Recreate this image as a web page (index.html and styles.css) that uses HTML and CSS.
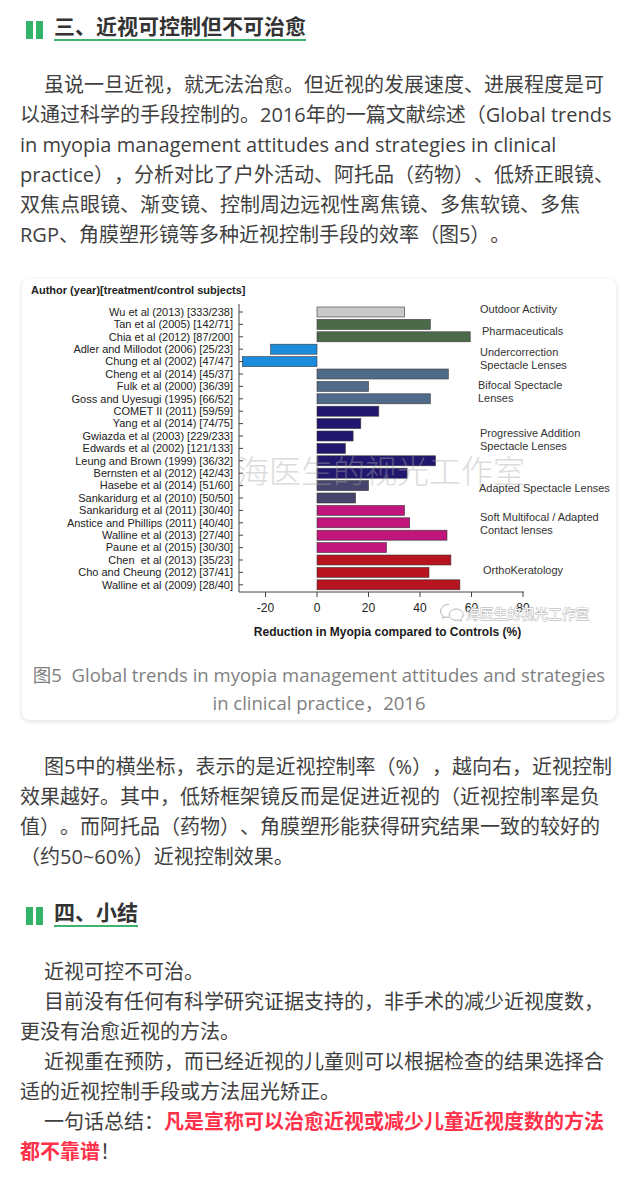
FILE: index.html
```html
<!DOCTYPE html>
<html lang="zh-CN">
<head>
<meta charset="utf-8">
<title>近视可控制但不可治愈</title>
<link rel="stylesheet" href="styles.css">
</head>
<body>
<main class="article">
  <div class="sec-head">
    <span class="bars"><i></i><i></i></span>
    <h2 class="sec-title">三、近视可控制但不可治愈</h2>
  </div>

  <p class="para lead">虽说一旦近视，就无法治愈。但近视的发展速度、进展程度是可以通过科学的手段控制的。2016年的一篇文献综述（Global trends in myopia management attitudes and strategies in clinical practice），分析对比了户外活动、阿托品（药物）、低矫正眼镜、双焦点眼镜、渐变镜、控制周边远视性离焦镜、多焦软镜、多焦RGP、角膜塑形镜等多种近视控制手段的效率（图5）。</p>

  <figure class="figure">
    <svg class="chart" width="594" height="382" viewBox="22 279 594 382" xmlns="http://www.w3.org/2000/svg">
      <text class="ttl" x="31" y="294">Author (year)[treatment/control subjects]</text>

      <g class="lbl" text-anchor="end">
        <text x="233" y="315.8">Wu et al (2013) [333/238]</text>
        <text x="233" y="328.2">Tan et al (2005) [142/71]</text>
        <text x="233" y="340.6">Chia et al (2012) [87/200]</text>
        <text x="233" y="353">Adler and Millodot (2006) [25/23]</text>
        <text x="233" y="365.4">Chung et al (2002) [47/47]</text>
        <text x="233" y="377.8">Cheng et al (2014) [45/37]</text>
        <text x="233" y="390.2">Fulk et al (2000) [36/39]</text>
        <text x="233" y="402.6">Goss and Uyesugi (1995) [66/52]</text>
        <text x="233" y="415">COMET II (2011) [59/59]</text>
        <text x="233" y="427.4">Yang et al (2014) [74/75]</text>
        <text x="233" y="439.8">Gwiazda et al (2003) [229/233]</text>
        <text x="233" y="452.2">Edwards et al (2002) [121/133]</text>
        <text x="233" y="464.6">Leung and Brown (1999) [36/32]</text>
        <text x="233" y="477">Bernsten et al (2012) [42/43]</text>
        <text x="233" y="489.4">Hasebe et al (2014) [51/60]</text>
        <text x="233" y="501.8">Sankaridurg et al (2010) [50/50]</text>
        <text x="233" y="514.2">Sankaridurg et al (2011) [30/40]</text>
        <text x="233" y="526.6">Anstice and Phillips (2011) [40/40]</text>
        <text x="233" y="539">Walline et al (2013) [27/40]</text>
        <text x="233" y="551.4">Paune et al (2015) [30/30]</text>
        <text x="233" y="563.8" xml:space="preserve">Chen  et al (2013) [35/23]</text>
        <text x="233" y="576.2">Cho and Cheung (2012) [37/41]</text>
        <text x="233" y="588.6">Walline et al (2009) [28/40]</text>
      </g>

      <g class="bar">
        <rect class="c-out" x="317" y="307" width="87.6" height="10"/>
        <rect class="c-ph" x="317" y="319.4" width="113.3" height="10"/>
        <rect class="c-ph" x="317" y="331.8" width="153.2" height="10"/>
        <rect class="c-und" x="270.6" y="344.2" width="46.4" height="10"/>
        <rect class="c-und" x="242.3" y="356.6" width="74.7" height="10"/>
        <rect class="c-bif" x="317" y="369" width="131.3" height="10"/>
        <rect class="c-bif" x="317" y="381.4" width="51.5" height="10"/>
        <rect class="c-bif" x="317" y="393.8" width="113.3" height="10"/>
        <rect class="c-pal" x="317" y="406.2" width="61.8" height="10"/>
        <rect class="c-pal" x="317" y="418.6" width="43.8" height="10"/>
        <rect class="c-pal" x="317" y="431" width="36.1" height="10"/>
        <rect class="c-pal" x="317" y="443.4" width="28.3" height="10"/>
        <rect class="c-pal" x="317" y="455.8" width="118.5" height="10"/>
        <rect class="c-pal" x="317" y="468.2" width="90.1" height="10"/>
        <rect class="c-ada" x="317" y="480.6" width="51.5" height="10"/>
        <rect class="c-ada" x="317" y="493" width="38.6" height="10"/>
        <rect class="c-soft" x="317" y="505.4" width="87.6" height="10"/>
        <rect class="c-soft" x="317" y="517.8" width="92.7" height="10"/>
        <rect class="c-soft" x="317" y="530.2" width="130" height="10"/>
        <rect class="c-soft" x="317" y="542.6" width="69.5" height="10"/>
        <rect class="c-ok" x="317" y="555" width="133.9" height="10"/>
        <rect class="c-ok" x="317" y="567.4" width="112" height="10"/>
        <rect class="c-ok" x="317" y="579.8" width="142.9" height="10"/>
      </g>

      <path class="axis" d="M239 304V592H524"/>
      <path class="axis" d="M239 312h4M239 324.4h4M239 336.8h4M239 349.2h4M239 361.6h4M239 374h4M239 386.4h4M239 398.8h4M239 411.2h4M239 423.6h4M239 436h4M239 448.4h4M239 460.8h4M239 473.2h4M239 485.6h4M239 498h4M239 510.4h4M239 522.8h4M239 535.2h4M239 547.6h4M239 560h4M239 572.4h4M239 584.8h4"/>
      <path class="axis" d="M265.5 592v5M317 592v5M368.5 592v5M420 592v5M471.5 592v5M523 592v5"/>

      <g class="tick" text-anchor="middle">
        <text x="265.5" y="612">-20</text>
        <text x="317" y="612">0</text>
        <text x="368.5" y="612">20</text>
        <text x="420" y="612">40</text>
        <text x="471.5" y="612">60</text>
        <text x="523" y="612">80</text>
      </g>
      <text class="axt" x="387.5" y="636" text-anchor="middle">Reduction in Myopia compared to Controls (%)</text>

      <g class="grp">
        <text x="480" y="313">Outdoor Activity</text>
        <text x="482" y="335">Pharmaceuticals</text>
        <text x="480" y="356">Undercorrection</text>
        <text x="480" y="368.5">Spectacle Lenses</text>
        <text x="478" y="389">Bifocal Spectacle</text>
        <text x="478" y="401.5">Lenses</text>
        <text x="480" y="437">Progressive Addition</text>
        <text x="480" y="449.5">Spectacle Lenses</text>
        <text x="479" y="492">Adapted Spectacle Lenses</text>
        <text x="480" y="521">Soft Multifocal / Adapted</text>
        <text x="480" y="533.5">Contact lenses</text>
        <text x="483" y="574">OrthoKeratology</text>
      </g>

      <text class="wm" x="237" y="483">海医生的视光工作室</text>

      <g class="wm-logo">
        <path d="M449 604.5c-5 0-8.5 3-8.5 6.6 0 2 1.1 3.7 2.8 4.9l-.7 2.3 2.7-1.4c1.1.3 2.3.5 3.7.5"/>
        <path d="M456.5 609c-4.2 0-7.3 2.6-7.3 5.7s3.1 5.7 7.3 5.7c.9 0 1.8-.1 2.6-.4l2.2 1.2-.6-2c1.5-1.1 2.4-2.700 2.4-4.5 0-3.1-3.2-5.7-6.6-5.7z"/>
      </g>
      <text class="wm2" x="466" y="619">海医生的视光工作室</text>
    </svg>
    <figcaption class="caption">图5&nbsp; Global trends in myopia management attitudes and strategies in clinical practice，2016</figcaption>
  </figure>

  <p class="para after-fig">图5中的横坐标，表示的是近视控制率（%），越向右，近视控制效果越好。其中，低矫框架镜反而是促进近视的（近视控制率是负值）。而阿托品（药物）、角膜塑形能获得研究结果一致的较好的（约50~60%）近视控制效果。</p>

  <div class="sec-head sec-two">
    <span class="bars"><i></i><i></i></span>
    <h2 class="sec-title">四、小结</h2>
  </div>

  <div class="summary">
    <p class="para">近视可控不可治。</p>
    <p class="para">目前没有任何有科学研究证据支持的，非手术的减少近视度数，更没有治愈近视的方法。</p>
    <p class="para">近视重在预防，而已经近视的儿童则可以根据检查的结果选择合适的近视控制手段或方法屈光矫正。</p>
    <p class="para">一句话总结：<strong class="alert">凡是宣称可以治愈近视或减少儿童近视度数的方法都不靠谱</strong>！</p>
  </div>
</main>
</body>
</html>
```

FILE: styles.css
```css
html, body {
  margin: 0;
  padding: 0;
  background: #ffffff;
}

body {
  color: #3f3f3f;
  font-family: "Open Sans", "Noto Sans CJK SC", sans-serif;
  font-size: 20px;
  line-height: 30px;
  text-spacing-trim: space-all;
}

.article {
  padding: 14px 20px 0;
}

.sec-head {
  display: flex;
  align-items: flex-end;
  gap: 11px;
  padding-left: 6px;
}

.bars {
  display: flex;
  gap: 3px;
  margin-bottom: 2px;
}

.bars i {
  display: block;
  width: 7px;
  height: 18px;
  background: #34b36a;
}

.sec-title {
  margin: 0;
  font-size: 21px;
  line-height: 25px;
  font-weight: 700;
  color: #333333;
  border-bottom: 2px solid #3cb46e;
}

.para {
  margin: 0;
  text-indent: 24px;
}

.lead {
  margin-top: 29px;
}

.figure {
  margin: 29px 4px 0 2px;
  background: #ffffff;
  border-radius: 8px;
  box-shadow: 0 1px 5px rgba(0, 0, 0, 0.14);
  overflow: hidden;
}

.chart {
  display: block;
}

.chart text {
  font-family: "Liberation Sans", Arial, sans-serif;
}

.chart .ttl {
  font-size: 11px;
  font-weight: 700;
  fill: #222222;
}

.chart .lbl {
  font-size: 11px;
  fill: #222222;
}

.chart .tick {
  font-size: 12px;
  fill: #222222;
}

.chart .axt {
  font-size: 12px;
  font-weight: 700;
  fill: #1a1a1a;
}

.chart .grp {
  font-size: 11px;
  fill: #333333;
}

.chart .axis {
  fill: none;
  stroke: #444444;
  stroke-width: 1;
}

.chart .bar rect {
  stroke: #3a3a3a;
  stroke-width: 0.6;
}

.c-out { fill: #c9c9c9; }
.c-ph { fill: #4c6a4a; }
.c-und { fill: #1b8bdc; }
.c-bif { fill: #506b8a; }
.c-pal { fill: #22176e; }
.c-ada { fill: #47446e; }
.c-soft { fill: #c0157a; }
.c-ok { fill: #b8141f; }

.chart .wm {
  font-family: "Noto Sans CJK SC", sans-serif;
  font-size: 32px;
  font-weight: 300;
  fill: #a8a8a8;
  opacity: 0.4;
}

.chart .wm-logo path {
  fill: #ffffff;
  stroke: #a9a9a9;
  stroke-width: 1;
  opacity: 0.9;
}

.chart .wm2 {
  font-family: "Noto Sans CJK SC", sans-serif;
  font-size: 13.7px;
  fill: #ffffff;
  stroke: #a9a9a9;
  stroke-width: 0.8;
  paint-order: stroke;
}

.caption {
  margin: 0;
  padding: 0 8px 3px;
  text-align: center;
  font-size: 18.5px;
  line-height: 28px;
  color: #7f7f7f;
}

.after-fig {
  margin-top: 32px;
}

.sec-two {
  margin-top: 28px;
}

.summary {
  margin-top: 30px;
}

.alert {
  color: #ff3049;
  font-weight: 700;
}
```
